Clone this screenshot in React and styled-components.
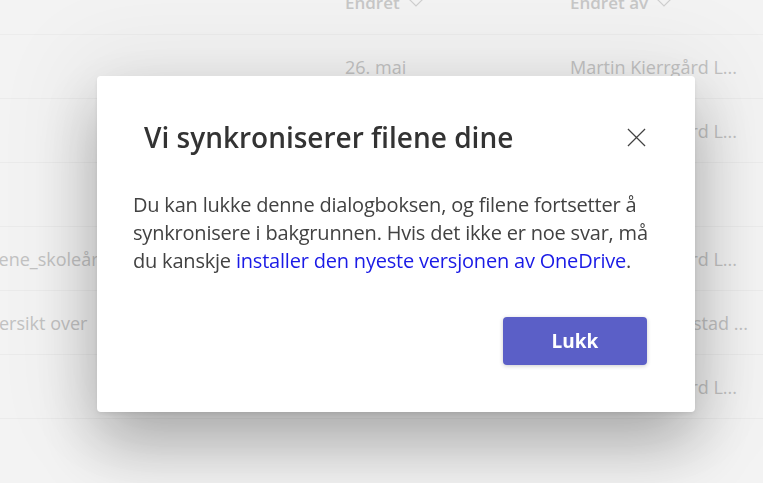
import React from 'react'
import styled, { createGlobalStyle } from 'styled-components'

const GlobalStyle = createGlobalStyle`
  html, body {
    margin: 0;
    padding: 0;
    width: 100%;
    height: 100%;
    overflow: hidden;
    background: #f3f3f3;
    font-family: "Open Sans", "Noto Sans", "Liberation Sans", sans-serif;
  }
`

const Page = styled.div`
  width: 763px;
  height: 483px;
  overflow: hidden;
  background: #f3f3f3;
`

const FileList = styled.div`
  margin-left: -24px;
  margin-top: -22px;
`

const HeaderRow = styled.div`
  display: grid;
  grid-template-columns: 369px 225px 1fr;
  height: 57px;
  box-sizing: border-box;
  padding-bottom: 7px;
  align-items: center;
  border-bottom: 1px solid #ececec;
  color: #c7c7c7;
  font-size: 17px;
  font-weight: 600;
`

const Row = styled.div`
  display: grid;
  grid-template-columns: 369px 225px 1fr;
  height: 63px;
  align-items: center;
  border-bottom: 1px solid #ebebeb;
  color: #c2c2c2;
  font-size: 18px;
  white-space: nowrap;
`

const Cell = styled.span`
  overflow: hidden;
  text-overflow: ellipsis;
  white-space: nowrap;
  display: flex;
  align-items: center;
  gap: 8px;
`

const Overlay = styled.div`
  position: fixed;
  inset: 0;
  display: flex;
  align-items: flex-start;
  padding: 76px 0 0 97px;
`

const Dialog = styled.div`
  width: 598px;
  height: 336px;
  box-sizing: border-box;
  background: #fff;
  border-radius: 4px;
  padding: 40px 44px 47px 36px;
  display: flex;
  flex-direction: column;
  box-shadow: 0 32px 64px rgba(0, 0, 0, 0.28), 0 0 90px 24px rgba(0, 0, 0, 0.06),
    0 2px 4px rgba(0, 0, 0, 0.08);
`

const Header = styled.div`
  display: flex;
  align-items: center;
  justify-content: space-between;
  height: 42px;
`

const Title = styled.h1`
  margin: 0 0 0 11px;
  font-size: 28px;
  font-weight: 600;
  color: #333;
  letter-spacing: 0;
`

const CloseButton = styled.button`
  width: 28px;
  height: 28px;
  margin-right: 1px;
  padding: 0;
  border: none;
  background: none;
  display: flex;
  align-items: center;
  justify-content: center;
  color: #424242;
  cursor: pointer;
`

const Body = styled.p`
  margin: 33px 0 0;
  font-size: 20px;
  line-height: 28px;
  color: #424242;
  letter-spacing: -0.2px;
`

const Link = styled.a`
  color: #1a1ae6;
  text-decoration: none;
`

const Footer = styled.div`
  margin-top: auto;
  display: flex;
  justify-content: flex-end;
  padding-right: 4px;
`

const PrimaryButton = styled.button`
  width: 144px;
  height: 48px;
  border: none;
  border-radius: 4px;
  background: #5b5fc7;
  color: #fff;
  font-family: inherit;
  font-size: 19px;
  font-weight: 700;
  box-shadow: 0 1px 4px rgba(0, 0, 0, 0.2);
  cursor: pointer;
`

const Chevron = () => (
  <svg width="16" height="10" viewBox="0 0 16 10" fill="none">
    <path d="M1 1l7 7 7-7" stroke="#cfcfcf" strokeWidth="1.2" />
  </svg>
)

const rows = [
  { name: '', date: '26. mai', by: 'Martin Kierrgård L...' },
  { name: '', date: '', by: 'Martin Kierrgård L...' },
  { name: '', date: '', by: '' },
  { name: 'Ukene_skoleåret', date: '', by: 'Martin Kierrgård L...' },
  { name: 'Oversikt over', date: '', by: 'Marianne Wolfstad ...' },
  { name: '', date: '', by: 'Martin Kierrgård L...' },
]

export default function App() {
  return (
    <Page>
      <GlobalStyle />
      <FileList>
        <HeaderRow>
          <Cell />
          <Cell>Endret <Chevron /></Cell>
          <Cell>Endret av <Chevron /></Cell>
        </HeaderRow>
        {rows.map((r, i) => (
          <Row key={i}>
            <Cell>{r.name}</Cell>
            <Cell>{r.date}</Cell>
            <Cell>{r.by}</Cell>
          </Row>
        ))}
      </FileList>
      <Overlay>
        <Dialog role="dialog">
          <Header>
            <Title>Vi synkroniserer filene dine</Title>
            <CloseButton aria-label="Lukk">
              <svg width="19" height="19" viewBox="0 0 20 20" fill="none">
                <path d="M1 1l18 18M19 1L1 19" stroke="currentColor" strokeWidth="1.3" />
              </svg>
            </CloseButton>
          </Header>
          <Body>
            Du kan lukke denne dialogboksen, og filene fortsetter å synkronisere i
            bakgrunnen. Hvis det ikke er noe svar, må du kanskje{' '}
            <Link href="#">installer den nyeste versjonen av OneDrive</Link>.
          </Body>
          <Footer>
            <PrimaryButton>Lukk</PrimaryButton>
          </Footer>
        </Dialog>
      </Overlay>
    </Page>
  )
}
